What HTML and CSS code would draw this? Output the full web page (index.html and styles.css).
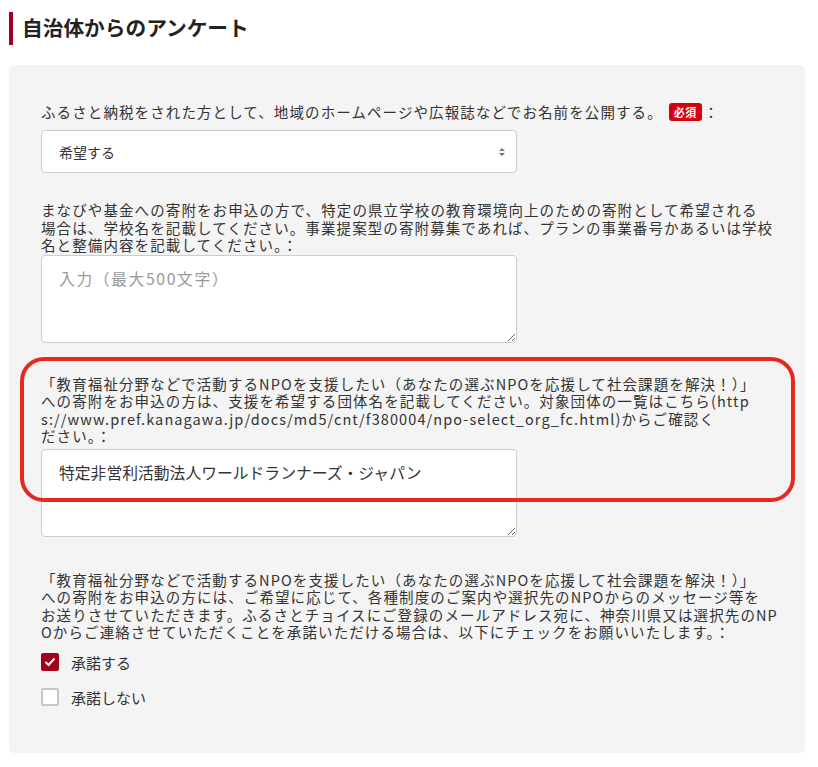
FILE: index.html
```html
<!DOCTYPE html>
<html lang="ja">
<head>
<meta charset="utf-8">
<title>自治体からのアンケート</title>
<link rel="stylesheet" href="styles.css">
</head>
<body>
<header class="page-head">
  <h2 class="title">自治体からのアンケート</h2>
</header>
<section class="panel">
  <div class="field f-select">
    <p class="label">ふるさと納税をされた方として、地域のホームページや広報誌などでお名前を公開する。<span class="badge">必須</span><span class="colon">：</span></p>
    <div class="select-wrap">
      <select class="control select">
        <option>希望する</option>
      </select>
      <svg class="select-arrows" width="8" height="12" viewBox="0 0 8 12"><path d="M1 5 L4 2 L7 5 Z M1 7 L4 10 L7 7 Z" fill="#777"/></svg>
    </div>
  </div>
  <div class="field f-school">
    <p class="label">まなびや基金への寄附をお申込の方で、特定の県立学校の教育環境向上のための寄附として希望される<br>場合は、学校名を記載してください。事業提案型の寄附募集であれば、プランの事業番号かあるいは学校<br>名と整備内容を記載してください。：</p>
    <textarea class="control area" placeholder="入力（最大500文字）"></textarea>
  </div>
  <div class="field f-npo">
    <p class="label">「教育福祉分野などで活動するNPOを支援したい（あなたの選ぶNPOを応援して社会課題を解決！）」<br>への寄附をお申込の方は、支援を希望する団体名を記載してください。対象団体の一覧はこちら(http<br>s://www.pref.kanagawa.jp/docs/md5/cnt/f380004/npo-select_org_fc.html)からご確認く<br>ださい。：</p>
    <textarea class="control area">特定非営利活動法人ワールドランナーズ・ジャパン</textarea>
  </div>
  <div class="field f-consent">
    <p class="label">「教育福祉分野などで活動するNPOを支援したい（あなたの選ぶNPOを応援して社会課題を解決！）」<br>への寄附をお申込の方には、ご希望に応じて、各種制度のご案内や選択先のNPOからのメッセージ等を<br>お送りさせていただきます。ふるさとチョイスにご登録のメールアドレス宛に、神奈川県又は選択先のNP<br>Oからご連絡させていただくことを承諾いただける場合は、以下にチェックをお願いいたします。：</p>
    <div class="checks">
      <label class="check"><span class="box checked"><svg width="12" height="10" viewBox="0 0 12 10"><path d="M1.5 5 L4.5 8 L10.5 1.5" fill="none" stroke="#fff" stroke-width="2"/></svg></span>承諾する</label>
      <label class="check"><span class="box"></span>承諾しない</label>
    </div>
  </div>
  <div class="highlight"></div>
</section>
</body>
</html>
```
FILE: styles.css
```css
html, body {
  margin: 0;
  padding: 0;
  background: #fff;
}
body {
  font-family: "Noto Sans CJK JP", "Noto Sans", sans-serif;
  color: #333;
}
.page-head {
  padding: 12px 0 0 9px;
}
.title {
  margin: 0;
  border-left: 4px solid #a3001b;
  padding-left: 9px;
  height: 33px;
  line-height: 31px;
  font-size: 20.7px;
  font-weight: bold;
  color: #222;
}
.panel {
  position: relative;
  margin: 20px 13px 14px 9px;
  background: #f4f4f4;
  border-radius: 5px;
  padding: 38px 32px 40px;
  height: 688px;
  box-sizing: border-box;
}
.field {
  margin-bottom: 28px;
}
.label {
  margin: 0 0 9px;
  font-size: 14.5px;
  letter-spacing: 1.1px;
  line-height: 17.5px;
  color: #333;
  text-spacing-trim: trim-all;
  white-space: nowrap;
}
.f-school {
  margin-bottom: 32px;
}
.f-school .label {
  margin-bottom: 1px;
}
.f-npo {
  margin-bottom: 34px;
}
.f-npo .label {
  margin-bottom: 4px;
}
.badge {
  display: inline-block;
  background: #d7000f;
  color: #fff;
  font-size: 11px;
  font-weight: bold;
  line-height: 18px;
  padding: 0 5px;
  border-radius: 3px;
  margin-left: 6px;
  letter-spacing: 0.5px;
  vertical-align: 1px;
}
.colon {
  margin-left: 2px;
}
.control {
  display: block;
  box-sizing: border-box;
  width: 476px;
  border: 1px solid #ccc;
  border-radius: 4px;
  background: #fff;
  font-family: "Noto Sans CJK JP", "Noto Sans", sans-serif;
  color: #333;
  margin: 0;
}
.select-wrap {
  position: relative;
  width: 476px;
}
.select {
  height: 43px;
  padding: 0 17px;
  font-size: 14px;
  -webkit-appearance: none;
  appearance: none;
}
.select-arrows {
  position: absolute;
  right: 11px;
  top: 16px;
}
.area {
  height: 88px;
  padding: 11px 17px;
  font-size: 15.8px;
  line-height: 24px;
  resize: vertical;
}
.area::placeholder {
  color: #9a9a9a;
  letter-spacing: 1.6px;
}
.checks {
  margin-top: 12px;
  display: flex;
  flex-direction: column;
  gap: 16px;
}
.check {
  display: flex;
  align-items: center;
  gap: 12px;
  font-size: 15px;
  color: #333;
  line-height: 19px;
}
.box {
  width: 18px;
  height: 18px;
  box-sizing: border-box;
  border: 2px solid #c6c6c6;
  border-radius: 2px;
  background: #fff;
  display: flex;
  align-items: center;
  justify-content: center;
}
.box.checked {
  background: #a3001b;
  border-color: #a3001b;
}
.highlight {
  position: absolute;
  left: 11px;
  top: 292px;
  width: 775px;
  height: 145px;
  box-sizing: border-box;
  border: 4px solid #e8281c;
  border-radius: 24px;
  pointer-events: none;
}
```
